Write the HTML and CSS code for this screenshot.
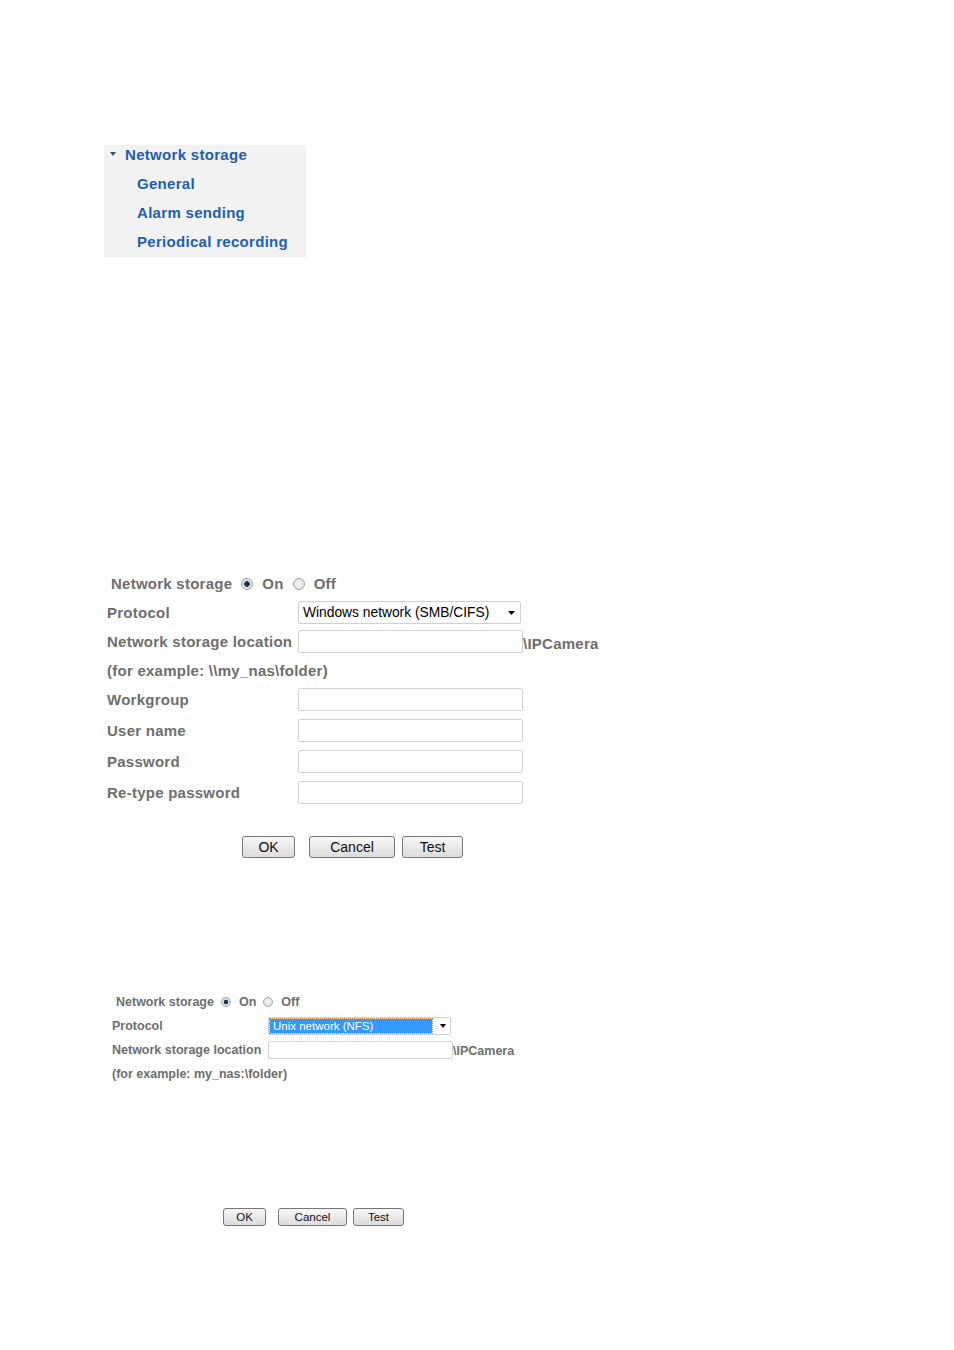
FILE: index.html
```html
<!DOCTYPE html>
<html lang="en">
<head>
    <meta charset="UTF-8">
    <meta name="viewport" content="width=device-width, initial-scale=1.0">
    <title>Network storage</title>
    <link rel="stylesheet" href="styles.css">
</head>
<body>
    <div class="menu">
        <div class="menu-head"><span class="caret"></span>Network storage</div>
        <ul class="menu-list">
            <li>General</li>
            <li>Alarm sending</li>
            <li>Periodical recording</li>
        </ul>
    </div>

    <form class="storage-form">
        <div class="rows">
            <div class="row radio-row">
                <span class="label">Network storage</span>
                <input type="radio" name="ns1" checked>
                <span class="opt">On</span>
                <input type="radio" name="ns1">
                <span class="opt">Off</span>
            </div>
            <div class="row">
                <span class="label">Protocol</span>
                <div class="select">
                    <span class="sel-value">Windows network (SMB/CIFS)</span>
                    <svg class="arrow" width="7" height="4" viewBox="0 0 7 4"><path d="M0 0h7L3.5 4z" fill="#000"/></svg>
                </div>
            </div>
            <div class="row">
                <span class="label">Network storage location</span>
                <input class="field" type="text">
                <span class="suffix">\IPCamera</span>
            </div>
            <div class="row">
                <span>(for example: \\my_nas\folder)</span>
            </div>
            <div class="rows rows-wide">
                <div class="row">
                    <span class="label">Workgroup</span>
                    <input class="field" type="text">
                </div>
                <div class="row">
                    <span class="label">User name</span>
                    <input class="field" type="text">
                </div>
                <div class="row">
                    <span class="label">Password</span>
                    <input class="field" type="password">
                </div>
                <div class="row">
                    <span class="label">Re-type password</span>
                    <input class="field" type="password">
                </div>
            </div>
        </div>
        <div class="actions">
            <button type="button" class="btn-ok">OK</button>
            <button type="button" class="btn-cancel">Cancel</button>
            <button type="button" class="btn-test">Test</button>
        </div>
    </form>

    <form class="storage-form compact">
        <div class="rows">
            <div class="row radio-row">
                <span class="label">Network storage</span>
                <input type="radio" name="ns2" checked>
                <span class="opt">On</span>
                <input type="radio" name="ns2">
                <span class="opt">Off</span>
            </div>
            <div class="row">
                <span class="label">Protocol</span>
                <div class="select focused">
                    <span class="sel-value">Unix network (NFS)</span>
                    <svg class="arrow" width="6" height="4" viewBox="0 0 6 4"><path d="M0 0h6L3 4z" fill="#000"/></svg>
                </div>
            </div>
            <div class="row">
                <span class="label">Network storage location</span>
                <input class="field" type="text">
                <span class="suffix">\IPCamera</span>
            </div>
            <div class="row">
                <span>(for example: my_nas:\folder)</span>
            </div>
        </div>
        <div class="actions">
            <button type="button" class="btn-ok">OK</button>
            <button type="button" class="btn-cancel">Cancel</button>
            <button type="button" class="btn-test">Test</button>
        </div>
    </form>
</body>
</html>
```

FILE: styles.css
```css
body {
    margin: 0;
    font-family: "Liberation Sans", Arial, sans-serif;
    color: #6e6e6e;
}

.menu {
    width: 202px;
    margin: 145px 0 0 104px;
    padding-bottom: 1px;
    background-color: #f2f2f2;
    color: #1f5fb0;
    font-size: 15px;
    font-weight: bold;
    letter-spacing: 0.3px;
}

.menu-head {
    display: flex;
    align-items: center;
    height: 18px;
    padding-left: 6px;
}

.caret {
    width: 0;
    height: 0;
    border-left: 3.5px solid transparent;
    border-right: 3.5px solid transparent;
    border-top: 4px solid #3d5566;
    margin-right: 9px;
}

.menu-list {
    list-style: none;
    margin: 6px 0 0;
    padding: 0 0 0 33px;
}

.menu-list li {
    line-height: 29px;
}

.storage-form {
    margin-top: 315px;
    padding-left: 107px;
}

.rows {
    display: flex;
    flex-direction: column;
    gap: 6px;
}

.rows-wide {
    gap: 8px;
}

.row {
    display: flex;
    align-items: center;
    height: 23px;
    font-size: 15px;
    font-weight: bold;
    letter-spacing: 0.25px;
    white-space: nowrap;
}

.label {
    width: 191px;
    flex: none;
}

.radio-row {
    padding-left: 4px;
}

.radio-row .label {
    width: auto;
    margin-right: 9px;
}

.radio-row input {
    appearance: none;
    width: 12px;
    height: 12px;
    margin: 0 9px 0 0;
    border: 1px solid #a4a4a4;
    border-radius: 50%;
    background: radial-gradient(circle, #f4f4f4 0, #dcdcdc 100%);
}

.radio-row input:checked {
    background: radial-gradient(circle, #1c3550 0 2.5px, #cfdbe3 3px, #eef2f5 100%);
}

.radio-row .opt {
    margin-right: 9px;
}

.field {
    width: 225px;
    height: 23px;
    box-sizing: border-box;
    margin: 0;
    padding: 0 4px;
    border: 1px solid #d3d3d3;
    border-radius: 2px;
    background: #fff;
}

.select {
    display: flex;
    align-items: center;
    justify-content: space-between;
    width: 223px;
    height: 23px;
    box-sizing: border-box;
    padding: 0 5px 0 4px;
    border: 1px solid #d0d0d0;
    border-radius: 2px;
    background: #fff;
    color: #000;
    font-size: 13.8px;
    font-weight: normal;
    letter-spacing: 0;
}

.suffix {
    margin-top: 3px;
}

.actions {
    display: flex;
    margin-top: 32px;
    padding-left: 135px;
}

.actions button {
    height: 22px;
    padding: 0;
    border: 1px solid #767676;
    border-radius: 3px;
    background: linear-gradient(#f7f7f7, #dcdcdc);
    color: #111;
    font-family: "Liberation Sans", Arial, sans-serif;
    font-size: 14px;
}

.btn-ok { width: 53px; }
.btn-cancel { width: 86px; margin-left: 14px; }
.btn-test { width: 61px; margin-left: 7px; }

/* smaller copy of the form */
.compact {
    margin-top: 135px;
    padding-left: 112px;
}

.compact .row {
    height: 18px;
    font-size: 12.5px;
    letter-spacing: 0;
}

.compact .label {
    width: 156px;
}

.compact .radio-row .label {
    width: auto;
    margin-right: 7px;
}

.compact .radio-row input {
    width: 10px;
    height: 10px;
    margin-right: 8px;
}

.compact .radio-row input:checked {
    background: radial-gradient(circle, #1c3550 0 2px, #cfdbe3 2.5px, #eef2f5 100%);
}

.compact .radio-row .opt {
    margin-right: 7px;
}

.compact .field {
    width: 185px;
    height: 18px;
}

.compact .select {
    width: 183px;
    height: 18px;
    padding: 0 4px 0 1px;
    border-color: #c9d3dc;
    font-size: 11.5px;
}

.select.focused .sel-value {
    width: 159px;
    height: 14px;
    line-height: 14px;
    padding-left: 3px;
    background: #3399ff;
    color: #fff;
    outline: 1px dotted #d8863a;
}

.compact .suffix {
    margin-top: 2px;
}

.compact .actions {
    margin-top: 125px;
    padding-left: 111px;
}

.compact .actions button {
    height: 18px;
    font-size: 11.5px;
}

.compact .btn-ok { width: 43px; }
.compact .btn-cancel { width: 69px; margin-left: 12px; }
.compact .btn-test { width: 51px; margin-left: 6px; }
```
